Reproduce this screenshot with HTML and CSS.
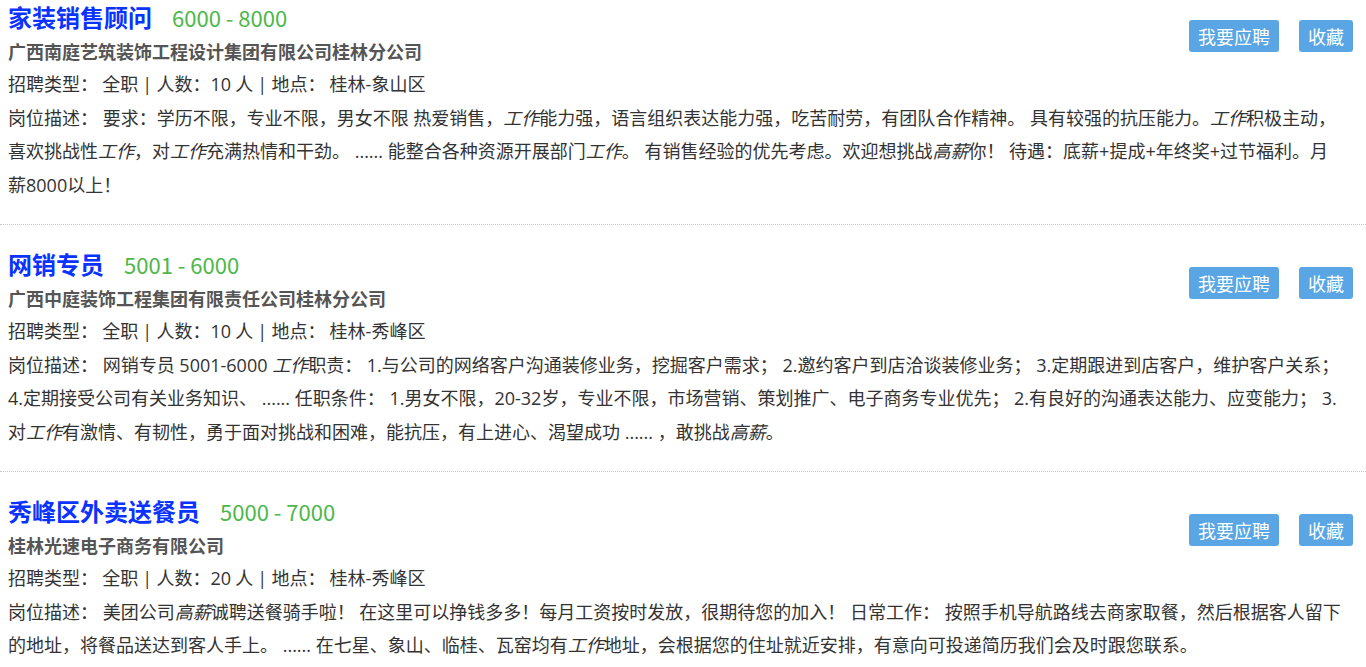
FILE: index.html
```html
<!DOCTYPE html>
<html lang="zh-CN">
<head>
<meta charset="utf-8">
<title>招聘信息</title>
<link rel="stylesheet" href="styles.css">
</head>
<body>
<div class="list">
  <div class="job">
    <div class="head"><span class="title">家装销售顾问</span><span class="salary">6000 - 8000</span></div>
    <div class="company">广西南庭艺筑装饰工程设计集团有限公司桂林分公司</div>
    <div class="info">招聘类型： 全职 | 人数：10 人 | 地点： 桂林-象山区</div>
    <div class="desc">岗位描述： 要求：学历不限，专业不限，男女不限 热爱销售，<em>工作</em>能力强，语言组织表达能力强，吃苦耐劳，有团队合作精神。 具有较强的抗压能力。<em>工作</em>积极主动，喜欢挑战性<em>工作</em>，对<em>工作</em>充满热情和干劲。 ...... 能整合各种资源开展部门<em>工作</em>。 有销售经验的优先考虑。欢迎想挑战<em>高薪</em>你！ 待遇：底薪+提成+年终奖+过节福利。月薪8000以上！</div>
    <div class="actions"><span class="btn">我要应聘</span><span class="btn">收藏</span></div>
  </div>
  <div class="job">
    <div class="head"><span class="title">网销专员</span><span class="salary">5001 - 6000</span></div>
    <div class="company">广西中庭装饰工程集团有限责任公司桂林分公司</div>
    <div class="info">招聘类型： 全职 | 人数：10 人 | 地点： 桂林-秀峰区</div>
    <div class="desc">岗位描述： 网销专员 5001-6000 <em>工作</em>职责： 1.与公司的网络客户沟通装修业务，挖掘客户需求； 2.邀约客户到店洽谈装修业务； 3.定期跟进到店客户，维护客户关系； 4.定期接受公司有关业务知识、 ...... 任职条件： 1.男女不限，20-32岁，专业不限，市场营销、策划推广、电子商务专业优先； 2.有良好的沟通表达能力、应变能力； 3.对<em>工作</em>有激情、有韧性，勇于面对挑战和困难，能抗压，有上进心、渴望成功 ...... ，敢挑战<em>高薪</em>。</div>
    <div class="actions"><span class="btn">我要应聘</span><span class="btn">收藏</span></div>
  </div>
  <div class="job">
    <div class="head"><span class="title">秀峰区外卖送餐员</span><span class="salary">5000 - 7000</span></div>
    <div class="company">桂林光速电子商务有限公司</div>
    <div class="info">招聘类型： 全职 | 人数：20 人 | 地点： 桂林-秀峰区</div>
    <div class="desc">岗位描述： 美团公司<em>高薪</em>诚聘送餐骑手啦！ 在这里可以挣钱多多！每月工资按时发放，很期待您的加入！ 日常工作： 按照手机导航路线去商家取餐，然后根据客人留下的地址，将餐品送达到客人手上。 ...... 在七星、象山、临桂、瓦窑均有<em>工作</em>地址，会根据您的住址就近安排，有意向可投递简历我们会及时跟您联系。</div>
    <div class="actions"><span class="btn">我要应聘</span><span class="btn">收藏</span></div>
  </div>
</div>
</body>
</html>
```

FILE: styles.css
```css
html, body {
  margin: 0;
  padding: 0;
  background: #fff;
}
body {
  font-family: "Open Sans", "Noto Sans CJK SC", sans-serif;
  color: #333;
  font-size: 18px;
}
.list {
  padding-top: 1px;
}
.job {
  position: relative;
  padding: 0 24px 22px 8px;
  margin-bottom: 23px;
  border-bottom: 1px dotted #c8c8c8;
}
.head {
  display: flex;
  align-items: baseline;
  gap: 20px;
  height: 34px;
  line-height: 31px;
}
.title {
  font-family: "Noto Sans CJK SC", sans-serif;
  font-size: 24px;
  font-weight: bold;
  color: #0a33ff;
}
.salary {
  font-family: "Noto Sans CJK SC", sans-serif;
  font-size: 22px;
  color: #4cb848;
}
.company {
  font-family: "Noto Sans CJK SC", sans-serif;
  font-weight: bold;
  color: #555;
  line-height: 33.4px;
}
.info, .desc {
  line-height: 33.4px;
}
.info {
  word-spacing: -0.5px;
}
.desc em {
  font-style: italic;
}
.actions {
  position: absolute;
  top: 19px;
  right: 13px;
  display: flex;
  gap: 20px;
}
.btn {
  display: block;
  font-family: "Noto Sans CJK SC", sans-serif;
  background: #5aa5e3;
  color: #fff;
  border-radius: 3px;
  padding: 0 9px;
  height: 32px;
  line-height: 32px;
  font-size: 18px;
}
```
